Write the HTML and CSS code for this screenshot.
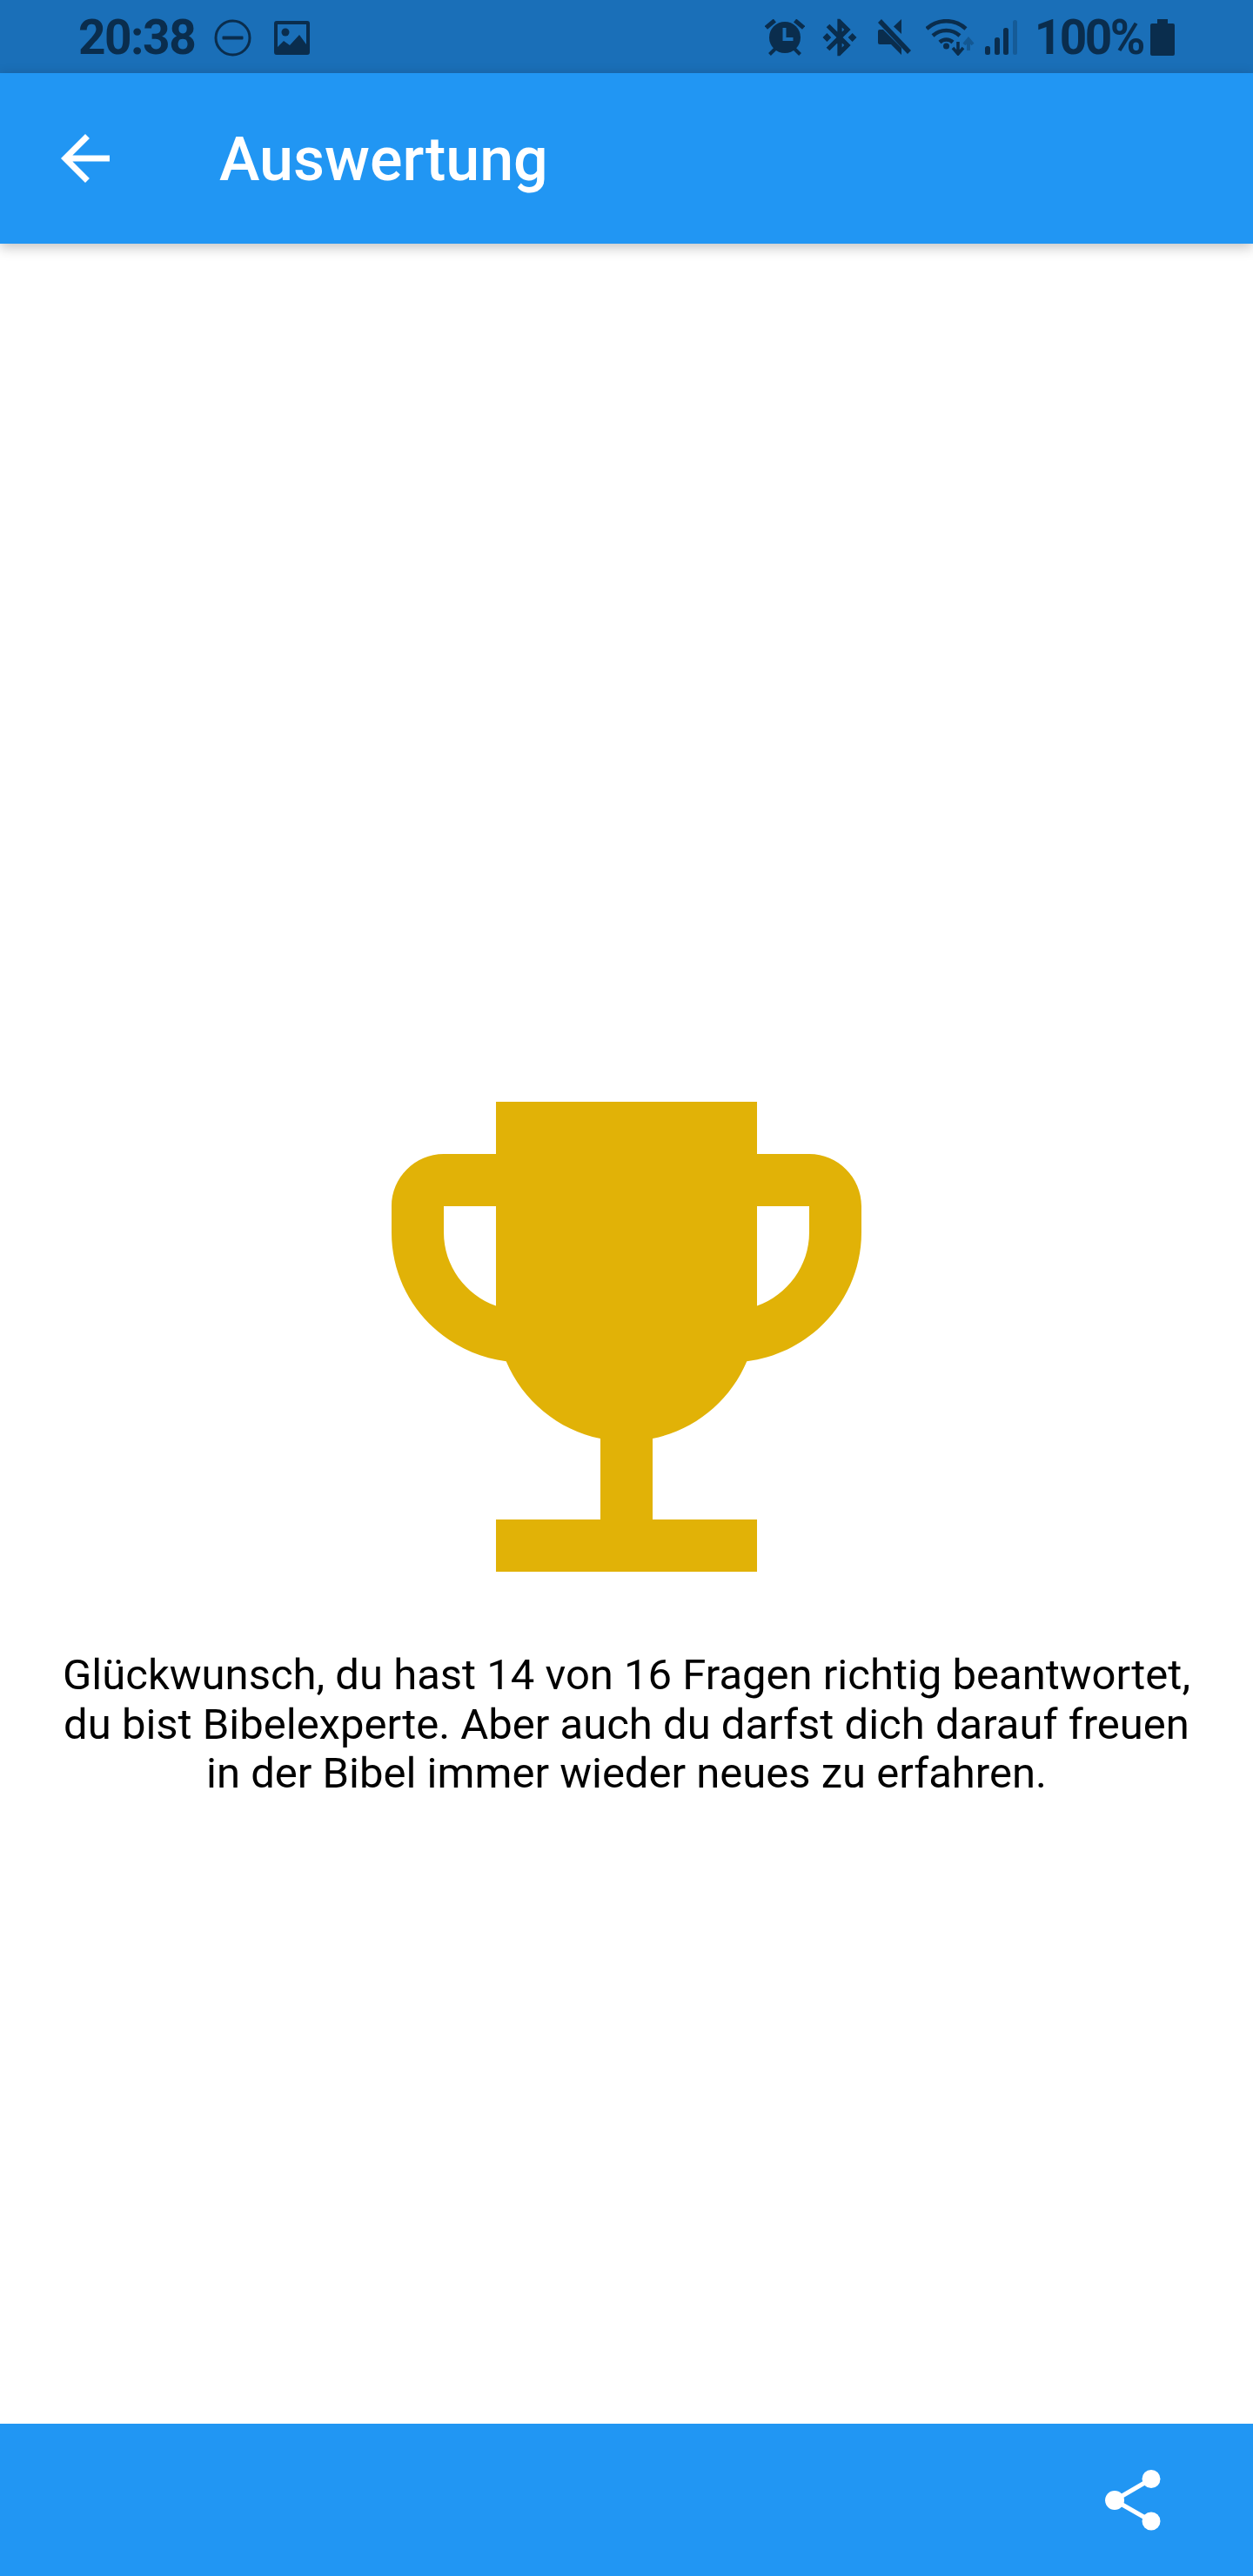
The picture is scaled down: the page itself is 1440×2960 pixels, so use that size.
FILE: index.html
```html
<!DOCTYPE html>
<html lang="de">
<head>
    <meta charset="UTF-8">
    <title>Auswertung</title>
    <link rel="stylesheet" href="styles.css">
</head>
<body>
    <div class="statusbar">
        <div class="status-left">
            <span class="time">20:38</span>
            <svg class="ico-dnd" viewBox="0 0 43 43"><circle cx="21.500" cy="21.500" r="19.500" fill="none" stroke="#0a2d4d" stroke-width="3"/><rect x="9.500" y="19.500" width="24" height="4" rx="1" fill="#0a2d4d"/></svg>
            <svg class="ico-image" viewBox="0 0 41 39"><path fill="#0a2d4d" fill-rule="evenodd" d="M3 0h35a3 3 0 0 1 3 3v33a3 3 0 0 1-3 3H3a3 3 0 0 1-3-3V3a3 3 0 0 1 3-3zM4 4v26l7-7 7 5 11-12 8 11V4z"/><circle cx="13" cy="13" r="4.500" fill="#0a2d4d"/></svg>
        </div>
        <div class="status-right">
            <svg class="ico-alarm" viewBox="0 0 46 42"><g fill="#0a2d4d"><rect x="-6" y="-2.500" width="13" height="5" transform="translate(6 6) rotate(-40)"/><rect x="-7" y="-2.500" width="13" height="5" transform="translate(40 6) rotate(40)"/><circle cx="23" cy="21" r="18"/><rect x="-5" y="-2" width="10" height="4" transform="translate(9 37) rotate(-45)"/><rect x="-5" y="-2" width="10" height="4" transform="translate(37 37) rotate(45)"/></g><path d="M22.500 10v13h10" fill="none" stroke="#1a6fb8" stroke-width="4"/></svg>
            <svg class="ico-bt" viewBox="0 0 24 24"><path fill="#0a2d4d" stroke="#0a2d4d" stroke-width=".5" d="M7 12l-2-2-2 2 2 2 2-2zm10.710-4.290L12 2h-1v7.590L6.410 5 5 6.410 10.590 12 5 17.590 6.410 19 11 14.410V22h1l5.710-5.710-4.300-4.290 4.300-4.290zM13 5.830l1.880 1.880L13 9.590V5.830zm1.880 10.460L13 18.170v-3.760l1.880 1.880zM19 10l-2 2 2 2 2-2-2-2z"/></svg>
            <svg class="ico-mute" viewBox="0 0 38 42"><g fill="#0a2d4d"><path d="M27 0v17l-9-8.500z"/><path d="M0 14a2 2 0 0 1 2-2h4l21 21v8L15 29H2a2 2 0 0 1-2-2z"/></g><path d="M2 2l34 36" stroke="#0a2d4d" stroke-width="5.500" fill="none"/></svg>
            <svg class="ico-wifi" viewBox="0 0 56 42"><g fill="none" stroke="#0a2d4d" stroke-width="4.500"><path d="M1 11a33 33 0 0 1 45 0"/><path d="M8 19a23 23 0 0 1 31 0"/><path d="M16 26.500a11 11 0 0 1 15 0"/></g><circle cx="23.500" cy="31" r="3.500" fill="#0a2d4d"/><path d="M37 26v14M31 33l6 7 6-7" fill="none" stroke="#0a2d4d" stroke-width="3.500"/><path d="M49 36V24M44 29l5-6 5 6" fill="none" stroke="#0a2d4d" stroke-opacity=".35" stroke-width="4"/></svg>
            <svg class="ico-signal" viewBox="0 0 37 40"><g fill="#0a2d4d"><rect x="0" y="30" width="6" height="10" rx="2.500"/><rect x="11" y="20" width="6" height="20" rx="2.500"/><rect x="21" y="9" width="6" height="31" rx="2.500"/><rect x="32" y="0" width="5" height="40" rx="2.500" fill-opacity=".3"/></g></svg>
            <span class="battery-pct">100%</span>
            <svg class="ico-battery" viewBox="0 0 28 42"><path fill="#0a2d4d" d="M8 0h12v5h6a2 2 0 0 1 2 2v33a2 2 0 0 1-2 2H2a2 2 0 0 1-2-2V7a2 2 0 0 1 2-2h6z"/></svg>
        </div>
    </div>

    <header class="appbar">
        <svg class="ico-back" viewBox="0 0 24 24"><path d="M20 11H7.830l5.590-5.590L12 4l-8 8 8 8 1.410-1.410L7.830 13H20v-2z" fill="#fff"/></svg>
        <h1 class="title">Auswertung</h1>
    </header>

    <main class="content">
        <svg class="trophy" viewBox="0 0 24 24"><path fill="#e1b207" d="M19 5h-2V3H7v2H5c-1.100 0-2 .9-2 2v1c0 2.550 1.920 4.630 4.390 4.940.63 1.500 1.980 2.630 3.610 2.960V19H7v2h10v-2h-4v-3.100c1.630-.33 2.980-1.460 3.610-2.960C19.080 12.630 21 10.550 21 8V7c0-1.100-.9-2-2-2zM5 8V7h2v3.820C5.840 10.400 5 9.300 5 8zm14 0c0 1.300-.84 2.400-2 2.820V7h2v1z"/></svg>
        <p class="message">Glückwunsch, du hast 14 von 16 Fragen richtig beantwortet, du bist Bibelexperte. Aber auch du darfst dich darauf freuen in der Bibel immer wieder neues zu erfahren.</p>
    </main>

    <footer class="bottombar">
        <svg class="ico-share" viewBox="0 0 64 70"><g fill="#fff"><circle cx="11" cy="35" r="11"/><circle cx="53" cy="10.500" r="10.500"/><circle cx="53" cy="59" r="10.500"/></g><path d="M11 35L53 10.500M11 35l42 24" stroke="#fff" stroke-width="5" fill="none"/></svg>
    </footer>
</body>
</html>
```

FILE: styles.css
```css
* {
    margin: 0;
    padding: 0;
    box-sizing: border-box;
}

body {
    display: flex;
    flex-direction: column;
    height: 2960px;
    background-color: #fff;
    font-family: Roboto, "Liberation Sans", sans-serif;
    overflow: hidden;
}

svg {
    display: block;
    flex-shrink: 0;
}

.statusbar {
    display: flex;
    align-items: center;
    justify-content: space-between;
    height: 84px;
    padding: 2px 90px 0 90px;
    background-color: #1a6fb8;
    color: #0a2d4d;
}

.status-left,
.status-right {
    display: flex;
    align-items: center;
}

.time,
.battery-pct {
    font-size: 55px;
    font-weight: 700;
    letter-spacing: -1.5px;
    line-height: 82px;
}

.ico-dnd {
    width: 43px;
    height: 43px;
    margin-left: 22px;
}

.ico-image {
    width: 41px;
    height: 39px;
    margin-left: 26px;
}

.ico-alarm {
    width: 46px;
    height: 42px;
}

.ico-bt {
    width: 50px;
    height: 50px;
    margin-left: 15px;
}

.ico-mute {
    width: 38px;
    height: 42px;
    margin-left: 19px;
}

.ico-wifi {
    width: 56px;
    height: 42px;
    margin-left: 17px;
}

.ico-signal {
    width: 37px;
    height: 40px;
    margin-left: 12px;
}

.battery-pct {
    margin-left: 20px;
    letter-spacing: -2.5px;
}

.ico-battery {
    width: 28px;
    height: 42px;
    margin-left: 8px;
}

.appbar {
    display: flex;
    align-items: center;
    height: 196px;
    padding-left: 56px;
    background-color: #2196f3;
    box-shadow: 0 4px 14px rgba(0, 0, 0, 0.25);
    position: relative;
}

.ico-back {
    width: 84px;
    height: 84px;
}

.title {
    margin-left: 112px;
    padding-top: 2px;
    font-size: 70px;
    font-weight: 500;
    color: #fff;
}

.content {
    flex: 1;
    display: flex;
    flex-direction: column;
    align-items: center;
    padding-top: 896px;
}

.trophy {
    width: 720px;
    height: 720px;
}

.message {
    width: 1320px;
    margin-top: 1px;
    font-size: 49px;
    line-height: 56.5px;
    text-align: center;
    color: #000;
}

.bottombar {
    display: flex;
    align-items: center;
    justify-content: flex-end;
    height: 175px;
    padding-right: 106px;
    background-color: #2196f3;
}

.ico-share {
    width: 64px;
    height: 70px;
}
```
